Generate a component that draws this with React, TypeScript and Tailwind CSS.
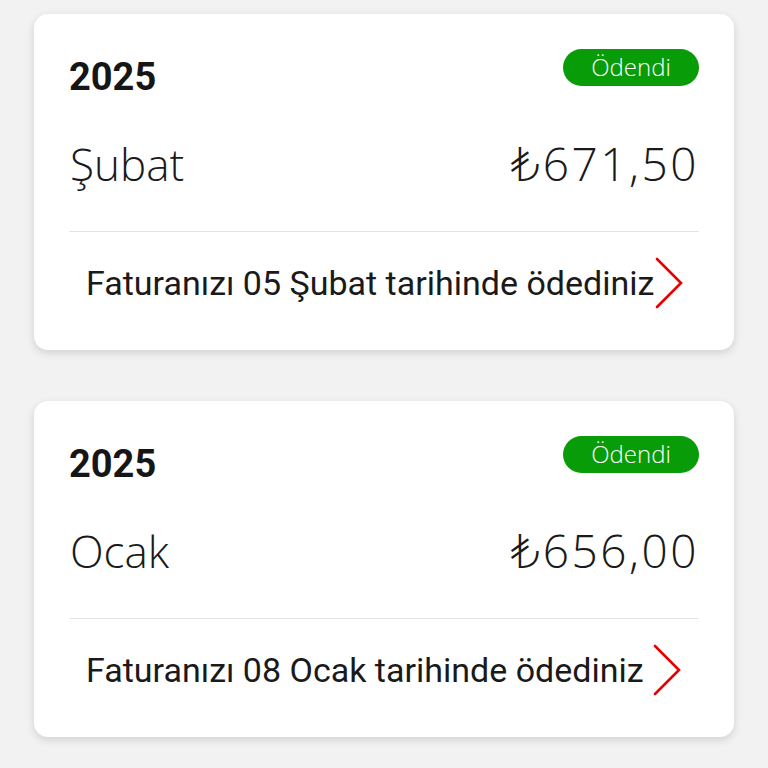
function Chevron() {
  return (
    <svg width="30" height="52" viewBox="0 0 30 52" fill="none" className="shrink-0">
      <path d="M3 2 L27 26 L3 50" stroke="#e60000" strokeWidth="2.6" strokeLinecap="round" strokeLinejoin="miter" />
    </svg>
  );
}

type Bill = { year: string; month: string; amount: string; paidText: string };

const bills: Bill[] = [
  { year: "2025", month: "Şubat", amount: "671,50", paidText: "Faturanızı 05 Şubat tarihinde ödediniz" },
  { year: "2025", month: "Ocak", amount: "656,00", paidText: "Faturanızı 08 Ocak tarihinde ödediniz" },
];

function BillCard({ bill }: { bill: Bill }) {
  return (
    <div className="bg-white rounded-[14px] shadow-[0_3px_8px_rgba(0,0,0,0.14)] px-[35px] pt-[35px] pb-[16px]">
      {/* year + status */}
      <div className="flex justify-between items-start">
        <div className="mt-[9px] text-[38px] leading-none font-bold text-[#161616] font-['Roboto',sans-serif]">
          {bill.year}
        </div>
        <div className="h-[37px] w-[136px] rounded-full bg-[#089c08] flex items-center justify-center text-white text-[24px] leading-none font-['Open_Sans',sans-serif] font-light pb-[2px]">
          Ödendi
        </div>
      </div>

      {/* month + amount */}
      <div className="mt-[44px] h-[46px] flex justify-between items-baseline font-['Open_Sans',sans-serif] font-light text-[44px] leading-none text-[#1a1a1a]">
        <span className="ml-[1px]">{bill.month}</span>
        <span className="text-[46px] tracking-[2.5px] whitespace-nowrap">
          <span className="font-['DejaVu_Sans',sans-serif] font-extralight tracking-[0px] mr-[3px]">₺</span>
          {bill.amount}
        </span>
      </div>

      <div className="mt-[45px] h-px bg-[#e3e3e3]"></div>

      <div className="h-[102px] flex items-center justify-between px-[17px]">
        <span className="text-[34px] leading-none text-[#1a1a1a] font-['Roboto',sans-serif] whitespace-nowrap">
          {bill.paidText}
        </span>
        <Chevron />
      </div>
    </div>
  );
}

export default function App() {
  return (
    <div className="min-h-[768px] bg-[#f2f2f2] px-[34px] pt-[14px] flex flex-col gap-[51px]">
      {bills.map((b, i) => (
        <BillCard key={i} bill={b} />
      ))}
    </div>
  );
}
